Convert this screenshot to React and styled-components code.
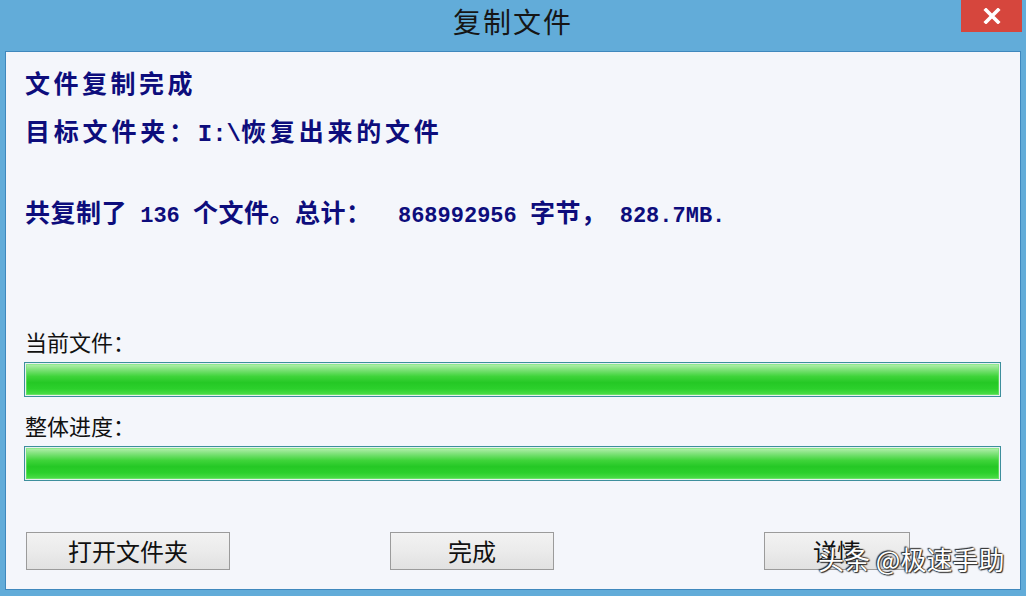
import React from "react";
import styled, { createGlobalStyle } from "styled-components";

const Global = createGlobalStyle`
  html, body { margin: 0; padding: 0; }
  body {
    background: #62acd9;
    font-family: "Noto Sans CJK SC", "Noto Sans", sans-serif;
  }
`;

const Window = styled.div`
  position: relative;
  width: 1026px;
  height: 596px;
  display: flex;
  flex-direction: column;
  background: #62acd9;
  box-sizing: border-box;
`;

const TitleBar = styled.div`
  height: 51px;
  flex: none;
  display: grid;
  grid-template-columns: 1fr auto 1fr;
  align-items: start;
`;

const Title = styled.div`
  grid-column: 2;
  height: 42px;
  line-height: 42px;
  font-size: 28px;
  letter-spacing: 2px;
  color: #161616;
  font-family: "Noto Sans CJK SC", sans-serif;
`;

const CloseBtn = styled.button`
  grid-column: 3;
  justify-self: end;
  margin-right: 4px;
  width: 61px;
  height: 32px;
  border: none;
  padding: 0;
  background: #d6463d;
  display: flex;
  align-items: center;
  justify-content: center;
  cursor: pointer;
`;

const Panel = styled.div`
  flex: 1;
  margin: 0 5px 6px 5px;
  border: 1px solid #3f88bd;
  background: #f4f6fb;
  padding: 6px 19px 0 18px;
  display: flex;
  flex-direction: column;
`;

const Line = styled.div`
  height: 48px;
  line-height: 48px;
  margin-top: ${(p) => p.$mt || 0}px;
  font-size: ${(p) => p.$fs || 25}px;
  font-weight: 700;
  letter-spacing: ${(p) => p.$ls || 0}px;
  color: #0d0d7c;
  white-space: pre;
  padding-left: 1px;
`;

const Num = styled.span`
  font-family: "Liberation Mono", monospace;
  font-size: ${(p) => p.$fs || 22}px;
  font-weight: 700;
  letter-spacing: 0;
`;

const Label = styled.div`
  height: 40px;
  line-height: 40px;
  margin-top: ${(p) => p.$mt || 0}px;
  font-size: 22px;
  color: #111;
  padding-left: 1px;
`;

const Bar = styled.div`
  margin-top: 1px;
  height: 35px;
  box-sizing: border-box;
  border: 1px solid #3d8f9c;
  background: #e8f0f0;
  padding: 1px;
`;

const Fill = styled.div`
  height: 100%;
  background: linear-gradient(
    to bottom,
    #b6f0b0 0%,
    #7fe27a 18%,
    #3fd43a 40%,
    #25c825 60%,
    #2cd02c 80%,
    #4ede4a 100%
  );
  box-shadow: inset 0 0 0 1px rgba(120, 230, 120, 0.6);
`;

const ButtonRow = styled.div`
  margin-top: 51px;
  display: flex;
  align-items: center;
`;

const Btn = styled.button`
  width: ${(p) => p.$w}px;
  margin-left: ${(p) => p.$ml}px;
  height: 38px;
  box-sizing: border-box;
  border: 1px solid #9b9b9b;
  background: linear-gradient(to bottom, #f2f2f2 0%, #ebebeb 50%, #e1e1e1 100%);
  font-family: "Noto Sans CJK SC", sans-serif;
  font-size: 24px;
  color: #111;
  padding: 0;
  line-height: 36px;
`;

const Watermark = styled.div`
  position: absolute;
  left: 818px;
  top: 540px;
  font-family: "Noto Sans CJK SC", sans-serif;
  font-size: 26px;
  color: #fff;
  white-space: pre;
  text-shadow: 0 0 2px #222, 0 0 1px #222, 1px 1px 1px #333, -1px -1px 1px #333;
`;

export default function App() {
  return (
    <>
      <Global />
      <Window>
        <TitleBar>
          <Title>复制文件</Title>
          <CloseBtn aria-label="关闭">
            <svg width="18" height="16" viewBox="0 0 18 16">
              <path d="M3 2 L15 14 M15 2 L3 14" stroke="#fff" strokeWidth="3.6" strokeLinecap="square" />
            </svg>
          </CloseBtn>
        </TitleBar>
        <Panel>
          <Line $ls={3.5}>文件复制完成</Line>
          <Line $ls={3.8}>
            目标文件夹：<Num $fs={24}>I:\</Num>恢复出来的文件
          </Line>
          <Line $mt={33} $ls={0.5}>
            共复制了<Num> 136 </Num>个文件。总计：<Num>  868992956 </Num>字节，<Num> 828.7MB.</Num>
          </Line>
          <Label $mt={86}>当前文件：</Label>
          <Bar>
            <Fill style={{ width: "100%" }} />
          </Bar>
          <Label $mt={8}>整体进度：</Label>
          <Bar>
            <Fill style={{ width: "100%" }} />
          </Bar>
          <ButtonRow>
            <Btn $w={204} $ml={2}>打开文件夹</Btn>
            <Btn $w={164} $ml={160}>完成</Btn>
            <Btn $w={146} $ml={210}>详情</Btn>
          </ButtonRow>
        </Panel>
        <Watermark>头条 @极速手助</Watermark>
      </Window>
    </>
  );
}
